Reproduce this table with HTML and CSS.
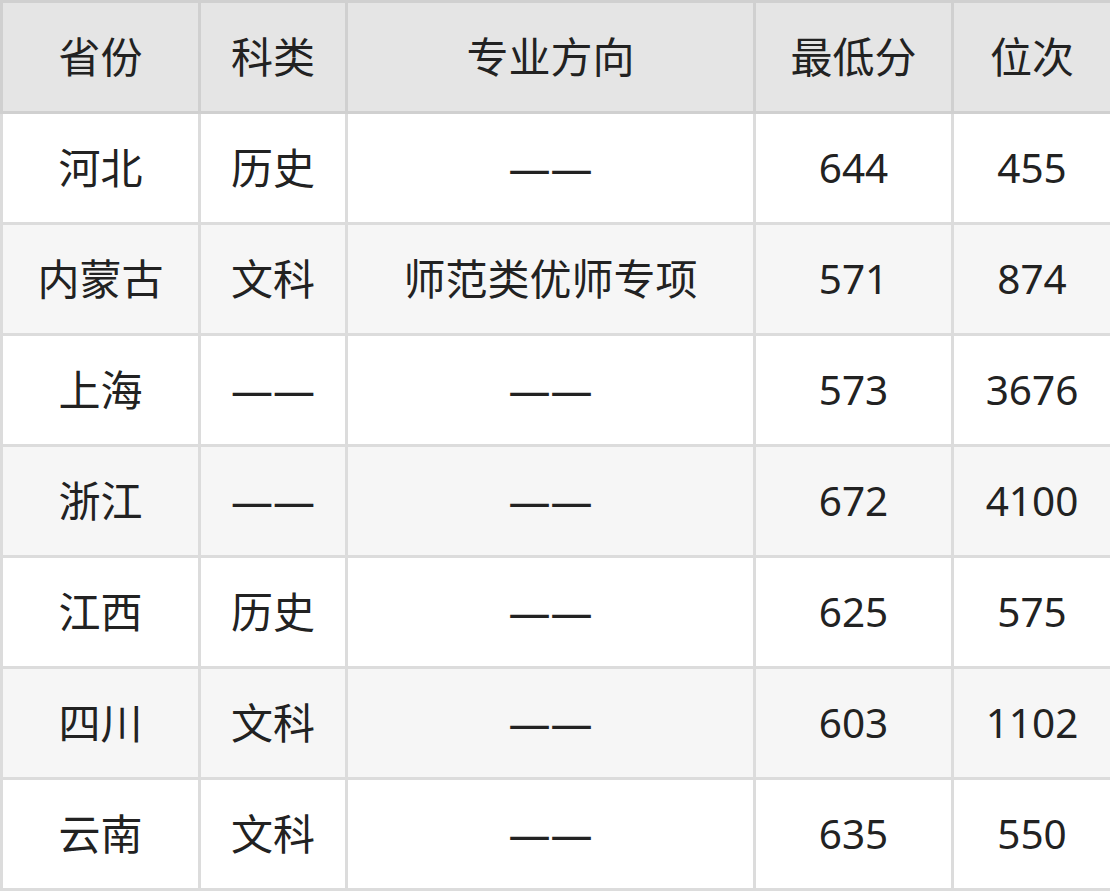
FILE: index.html
```html
<!DOCTYPE html>
<html lang="zh-CN">
<head>
<meta charset="utf-8">
<link rel="stylesheet" href="styles.css">
</head>
<body>
<table class="score-table">
  <colgroup>
    <col class="c1"><col class="c2"><col class="c3"><col class="c4"><col class="c5">
  </colgroup>
  <thead>
    <tr><th>省份</th><th>科类</th><th>专业方向</th><th>最低分</th><th>位次</th></tr>
  </thead>
  <tbody>
    <tr><td>河北</td><td>历史</td><td>——</td><td class="num">644</td><td class="num">455</td></tr>
    <tr><td>内蒙古</td><td>文科</td><td>师范类优师专项</td><td class="num">571</td><td class="num">874</td></tr>
    <tr><td>上海</td><td>——</td><td>——</td><td class="num">573</td><td class="num">3676</td></tr>
    <tr><td>浙江</td><td>——</td><td>——</td><td class="num">672</td><td class="num">4100</td></tr>
    <tr><td>江西</td><td>历史</td><td>——</td><td class="num">625</td><td class="num">575</td></tr>
    <tr><td>四川</td><td>文科</td><td>——</td><td class="num">603</td><td class="num">1102</td></tr>
    <tr><td>云南</td><td>文科</td><td>——</td><td class="num">635</td><td class="num">550</td></tr>
  </tbody>
</table>
</body>
</html>
```

FILE: styles.css
```css
html, body {
  margin: 0;
  padding: 0;
  background: #ffffff;
}
.score-table {
  border-collapse: collapse;
  table-layout: fixed;
  width: 1110px;
  font-family: "Noto Sans", "Noto Sans CJK SC", sans-serif;
  color: #222222;
}
.c1 { width: 198px; }
.c2 { width: 147px; }
.c3 { width: 408px; }
.c4 { width: 198px; }
.c5 { width: 159px; }
.score-table th,
.score-table td {
  border: 3px solid #dcdcdc;
  height: 108px;
  padding: 0;
  text-align: center;
  vertical-align: middle;
  font-weight: normal;
  font-size: 42px;
  line-height: 1;
  box-sizing: content-box;
}
.score-table td.num {
  font-size: 40.5px;
}
.score-table th {
  background: #e5e5e5;
  border-color: #d0d0d0;
}
.score-table tbody tr:nth-child(even) td {
  background: #f6f6f6;
}
```
